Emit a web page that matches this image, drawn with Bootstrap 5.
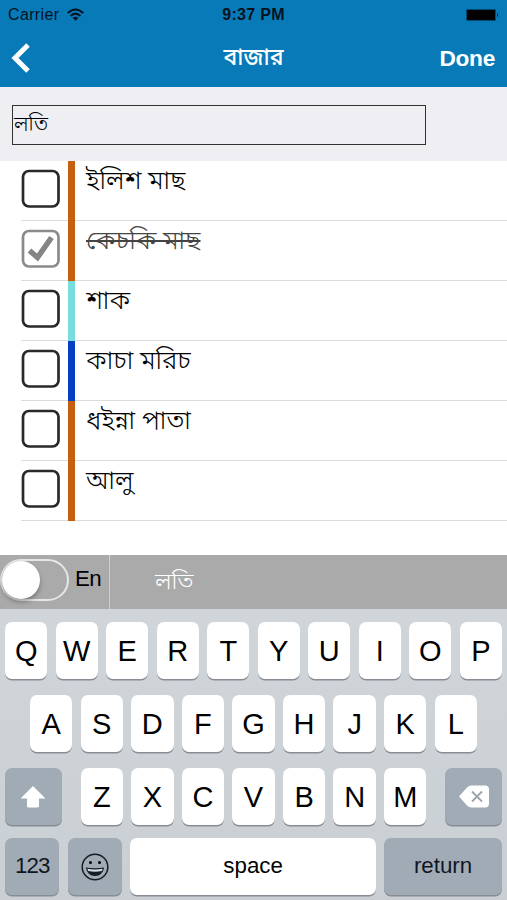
<!DOCTYPE html>
<html lang="bn">
<head>
<meta charset="utf-8">
<meta name="viewport" content="width=device-width, initial-scale=1">
<title>বাজার</title>
<link href="https://cdn.jsdelivr.net/npm/bootstrap@5.3.0/dist/css/bootstrap.min.css" rel="stylesheet">
<style>
body{font-family:"Liberation Sans","Noto Sans Bengali",sans-serif;color:#000;background:#fff;overflow:hidden}
.app{width:507px;height:900px}
.topbar{height:87px;background:#087ab8}
.status{height:30px;font-size:16px;line-height:30px;color:#04131e;display:grid;grid-template-columns:1fr auto 1fr}
.titlebar{height:57px;display:grid;grid-template-columns:1fr auto 1fr;padding-bottom:1px}
.bn{font-family:"Noto Sans Bengali","Liberation Sans",sans-serif;font-weight:300;white-space:nowrap}
.ttl{font-size:23px;line-height:59px;height:56px;font-weight:500}
.done{font-size:22.7px;font-weight:bold;letter-spacing:-.3px}
.entry{height:74px;background:#efeef3;padding:18px 0 0 12px}
.field{width:414px;height:40px;border:1px solid #333;padding:0 1px;font-size:20.5px;line-height:40px}
.items{height:394px}
.item{height:60px;margin-left:21px;border-bottom:1px solid #dcdcdc}
.tick{width:39px;height:39px;margin:8px 8px 0 0}
.stripe{width:7px;height:60px;background:#c65f10}
.stripe.cyan{background:#79dde0}
.stripe.blue{background:#063fc0}
.label{font-size:26px;line-height:44px;height:59px;padding-left:11px}
.struck{color:#444;text-decoration:line-through;text-decoration-thickness:2px}
.suggest{height:54px;background:#aaa}
.lang{width:110px;border-right:1px solid #d0d0d0}
.switch{width:69px;height:42px;border:2px solid #e6e6e6;border-radius:21px;margin-top:-4px}
.knob{width:38px;height:38px;border-radius:50%;background:#fff;box-shadow:0 3px 5px rgba(0,0,0,.3)}
.en{font-size:22.3px;line-height:48px;margin-left:6px;letter-spacing:-.5px}
.word{font-size:23.3px;line-height:57px;height:54px;padding-left:45px;color:#fff}
.keys{height:291px;background:linear-gradient(#d0d5da,#cacfd4);padding:13px 5px 0}
.krow{height:57px;gap:8.2px;margin-bottom:16px}
.krow.short{margin-bottom:13px}
.key{width:42.4px;height:57px;border-radius:7px;background:#fff;box-shadow:0 1.5px 0 #888d93;font-size:29px;line-height:58px}
.key.dark{background:#a1abb6;color:#10161f}
.key.word-key{font-size:22.3px;line-height:55px}
.key.num{letter-spacing:-1px}
.w-mod{width:56.5px}.w-num{width:54.5px}.w-space{width:246px}.w-ret{width:118px}
</style>
</head>
<body>
<div class="app d-flex flex-column">
<header class="topbar">
<div class="status px-2">
<div class="d-flex align-items-center"><span style="letter-spacing:.35px">Carrier</span>
<svg class="ms-2" width="17" height="14" viewBox="0 0 17 14" fill="none" stroke="#06121c" stroke-width="2"><path d="M.8 5Q8.500-2 16.200 5M3.600 8Q8.500 3.300 13.400 8"/><path d="M5.600 9.800Q8.500 7.500 11.400 9.800L8.500 12.800Z" fill="#06121c" stroke="none"/></svg></div>
<b style="letter-spacing:.3px">9:37 PM</b>
<div class="d-flex align-items-center justify-content-end"><svg width="33" height="12" viewBox="0 0 33 12"><rect x=".5" y=".5" width="29" height="11" rx="1" fill="#000" stroke="#034a72"/><path d="M31 4Q33 6 31 8Z"/></svg></div>
</div>
<div class="titlebar text-white">
<div class="d-flex align-items-center"><svg width="32" height="32" viewBox="0 0 32 32" fill="none" stroke="#fff" stroke-width="5"><path d="M28 3L15 16L28 29"/></svg></div>
<div class="bn ttl">বাজার</div>
<div class="done text-end d-flex align-items-center justify-content-end pe-2 me-1">Done</div>
</div>
</header>
<section class="entry"><div class="field bn">লতি</div></section>
<main class="items">
<div class="item d-flex"><svg class="tick" viewBox="0 0 39 39"><rect x="2" y="2" width="35.500" height="35.500" rx="6" fill="#fff" stroke="#292929" stroke-width="2.700"/></svg><div class="stripe"></div><div class="label bn">ইলিশ মাছ</div></div>
<div class="item d-flex"><svg class="tick" viewBox="0 0 39 39"><rect x="2" y="2" width="35.500" height="35.500" rx="6" fill="#fff" stroke="#8b8b8b" stroke-width="2.700"/><path d="M8.500 21.500L16.500 28.500L30.500 8.500" fill="none" stroke="#858585" stroke-width="5.500"/></svg><div class="stripe"></div><div class="label bn"><span class="struck">কেচকি মাছ</span></div></div>
<div class="item d-flex"><svg class="tick" viewBox="0 0 39 39"><rect x="2" y="2" width="35.500" height="35.500" rx="6" fill="#fff" stroke="#292929" stroke-width="2.700"/></svg><div class="stripe cyan"></div><div class="label bn">শাক</div></div>
<div class="item d-flex"><svg class="tick" viewBox="0 0 39 39"><rect x="2" y="2" width="35.500" height="35.500" rx="6" fill="#fff" stroke="#292929" stroke-width="2.700"/></svg><div class="stripe blue"></div><div class="label bn">কাচা মরিচ</div></div>
<div class="item d-flex"><svg class="tick" viewBox="0 0 39 39"><rect x="2" y="2" width="35.500" height="35.500" rx="6" fill="#fff" stroke="#292929" stroke-width="2.700"/></svg><div class="stripe"></div><div class="label bn">ধইন্না পাতা</div></div>
<div class="item d-flex"><svg class="tick" viewBox="0 0 39 39"><rect x="2" y="2" width="35.500" height="35.500" rx="6" fill="#fff" stroke="#292929" stroke-width="2.700"/></svg><div class="stripe"></div><div class="label bn">আলু</div></div>
</main>
<section class="suggest d-flex">
<div class="lang d-flex"><div class="switch flex-shrink-0 align-self-center"><div class="knob"></div></div><div class="en">En</div></div>
<div class="word bn">লতি</div>
</section>
<section class="keys text-center">
<div class="krow d-flex justify-content-center"><div class="key">Q</div><div class="key">W</div><div class="key">E</div><div class="key">R</div><div class="key">T</div><div class="key">Y</div><div class="key">U</div><div class="key">I</div><div class="key">O</div><div class="key">P</div></div>
<div class="krow d-flex justify-content-center"><div class="key">A</div><div class="key">S</div><div class="key">D</div><div class="key">F</div><div class="key">G</div><div class="key">H</div><div class="key">J</div><div class="key">K</div><div class="key">L</div></div>
<div class="krow short d-flex justify-content-between">
<div class="key dark w-mod d-flex align-items-center justify-content-center"><svg width="26" height="22" viewBox="0 0 26 22"><path d="M13 0L25.500 12.500H19V20Q19 21.500 17.500 21.500H8.500Q7 21.500 7 20V12.500H.5Z" fill="#fff"/></svg></div>
<div class="d-flex" style="gap:8.2px"><div class="key">Z</div><div class="key">X</div><div class="key">C</div><div class="key">V</div><div class="key">B</div><div class="key">N</div><div class="key">M</div></div>
<div class="key dark w-mod d-flex align-items-center justify-content-center"><svg width="30" height="23" viewBox="0 0 30 23"><path d="M0 11.500L8 2.500Q10 .5 12.500 .5H26Q30 .5 30 4.500V18.500Q30 22.500 26 22.500H12.500Q10 22.500 8 20.500Z" fill="#fff"/><path d="M13 6.500L23 16.500M23 6.500L13 16.500" stroke="#9ba4ad" stroke-width="1.800"/></svg></div>
</div>
<div class="krow d-flex justify-content-between">
<div class="key dark word-key num w-num">123</div>
<div class="key dark w-num d-flex align-items-center justify-content-center"><svg width="28" height="28" viewBox="0 0 28 28"><circle cx="14" cy="14" r="12.800" fill="none" stroke="#151b24" stroke-width="1.500"/><circle cx="9.500" cy="9.500" r="1.500"/><circle cx="18.500" cy="9.500" r="1.500"/><path d="M4.800 14.500Q14 16 23.200 14.500Q21.500 23 14 23Q6.500 23 4.800 14.500Z" fill="#151b24"/><path d="M6.300 15.800Q14 17.200 21.700 15.800L20.800 18Q14 19.500 7.200 18Z" fill="#d5dae0"/></svg></div>
<div class="key word-key w-space">space</div>
<div class="key dark word-key w-ret">return</div>
</div>
</section>
</div>
<script src="https://cdn.jsdelivr.net/npm/bootstrap@5.3.0/dist/js/bootstrap.bundle.min.js"></script>
</body>
</html>
